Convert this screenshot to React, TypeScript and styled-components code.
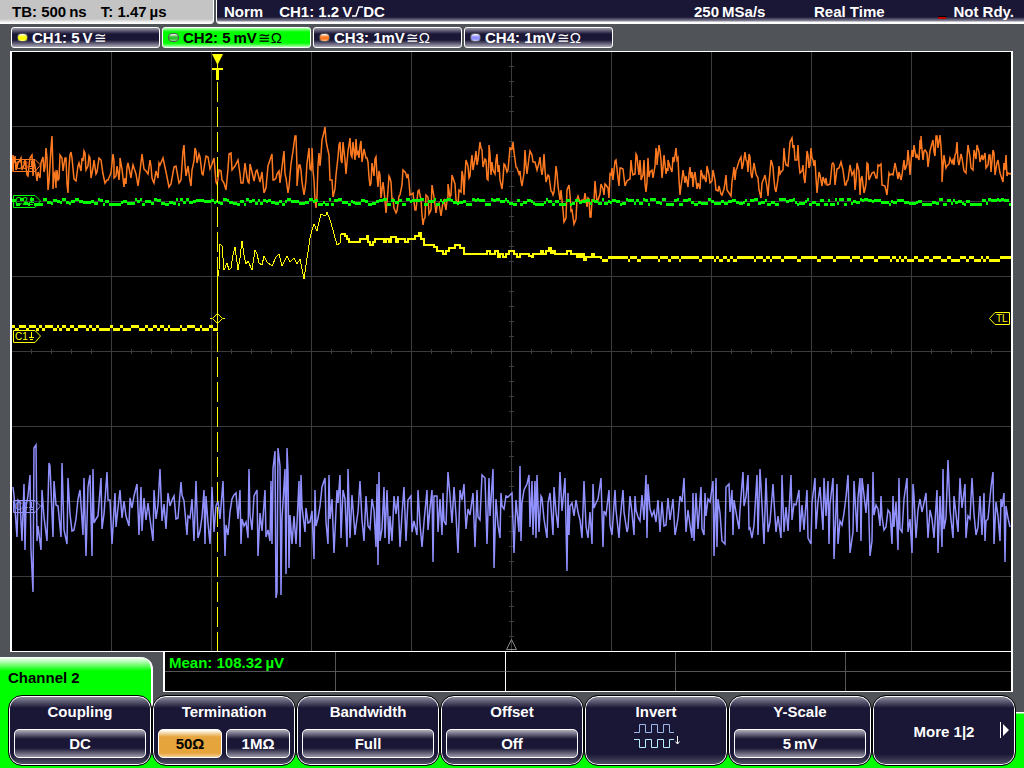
import React from "react";
import styled, { createGlobalStyle } from "styled-components";

const color = {
  shell: "#505458",
  navy: "#1a1635",
  green: "#00ff00",
  amber: "#e6a43c",
  yellow: "#ffff00",
  orange: "#ff7a20",
  violet: "#9090ff",
  grid: "#3c3c3c",
};

const Global = createGlobalStyle`
  *, *::before, *::after { box-sizing: border-box; }
  body {
    margin: 0;
    background: ${color.shell};
    font: bold 15px/18px "Liberation Sans", Arial, sans-serif;
  }
  button {
    margin: 0;
    padding: 0;
    font: inherit;
    cursor: pointer;
  }
`;

const Screen = styled.main`
  display: flex;
  flex-direction: column;
  min-height: 100vh;
  color: #fff;
  white-space: nowrap;
`;

/* ---------- header ---------- */

const Header = styled.header`
  display: flex;
  gap: 2px;
  height: 24px;
`;

const TimeBase = styled.div`
  display: flex;
  gap: 14px;
  flex: 0 0 214px;
  padding: 3px 0 0 12px;
  color: #000;
  background: linear-gradient(#c4c4c4 19px, #fff 23px);
  border-right: 1px solid #fff;
  border-radius: 0 0 4px 0;
`;

const Acquisition = styled.div`
  display: flex;
  flex: 1;
  align-items: flex-start;
  padding: 3px 0 0 7px;
  background: linear-gradient(${color.navy} 17px, #8c8a9c 21px, #fff 22px);
  border-left: 1px solid #fff;
  border-radius: 0 0 0 4px;
`;

const Trigger = styled.div`
  display: flex;
  flex: 1;
  gap: 16px;
`;

const SampleRate = styled.div`
  width: 120px;
`;

const Status = styled.div`
  display: flex;
  justify-content: space-between;
  width: 210px;
  padding-right: 10px;
`;

const Ready = styled.span`
  display: flex;
  align-items: flex-end;
  gap: 7px;
`;

const ReadyMark = styled.i`
  width: 8px;
  height: 3px;
  margin-bottom: 2px;
  background: #c00000;
  border-top: 1px solid #000;
`;

const SlopeIcon = styled.svg`
  margin: 0;
`;

/* ---------- channel buttons ---------- */

const Channels = styled.nav`
  display: flex;
  gap: 2px;
  padding: 3px 11px;
`;

const ChannelButton = styled.button<{ $active?: boolean }>`
  display: flex;
  align-items: center;
  width: 149px;
  height: 21px;
  padding-left: 5px;
  color: ${(p) => (p.$active ? "#000" : "#fff")};
  background: ${(p) =>
    p.$active
      ? `linear-gradient(#b0ffb0, ${color.green} 4px, ${color.green} 15px, #b0ffb0)`
      : `linear-gradient(#9a98a8, ${color.navy} 6px, ${color.navy} 12px, #aaa8b8)`};
  border: 1px solid #fff;
  border-radius: 3px;
`;

const Led = styled.i<{ $color: string }>`
  width: 11px;
  height: 9px;
  margin-right: 4px;
  background: linear-gradient(#fff, ${(p) => p.$color} 3px, ${(p) => p.$color} 5px, #fff 9px);
  border: 1px solid #555;
  border-radius: 4px;
`;

const Coupling = styled.span`
  margin-left: 1px;
  font-weight: normal;
`;

/* ---------- plot ---------- */

const Plot = styled.section`
  margin: 0 11px 0 10px;
  background: #000;
  border: solid #fff;
  border-width: 1px 2px;
`;

const PlotArea = styled.svg`
  display: block;
  width: 100%;
  height: auto;
`;

/* ---------- measurement strip ---------- */

const Strip = styled.section`
  display: flex;
  gap: 10px;
  height: 40px;
  margin-right: 11px;
`;

const MenuTab = styled.h1`
  flex: 0 0 153px;
  margin: 5px 0 0;
  padding: 12px 0 0 8px;
  font: inherit;
  color: #000;
  background: linear-gradient(#fff, #c0ffc0 4px, ${color.green} 14px);
  border-right: 2px solid #fff;
  border-radius: 0 12px 0 0;
`;

const Measurements = styled.table`
  flex: 1;
  display: table;
  width: 100%;
  height: 40px;
  table-layout: fixed;
  border-collapse: separate;
  border-spacing: 0;
  background: #000;
  border: solid #fff;
  border-width: 0 2px 1px;
  color: ${color.green};

  td {
    height: 19px;
    padding: 0 0 0 4px;
    line-height: 17px;
    border-left: 1px solid #555;
  }
  td:not(:last-child) { width: 20.1%; }
  td:first-child { border-left: 0; }
  td:nth-child(3) { border-left-color: #fff; }
  tr:first-child td { height: 20px; padding-top: 2px; border-bottom: 1px solid #555; }
`;

/* ---------- soft-key menu ---------- */

const Menu = styled.nav`
  display: grid;
  grid-template-columns: repeat(7, 1fr);
  flex: 1;
  align-items: start;
  padding: 3px 8px 2px;
  background:
    linear-gradient(${color.green}, ${color.green}) left top / 151px 14px no-repeat,
    linear-gradient(#fff, #fff) left top / 153px 14px no-repeat,
    linear-gradient(${color.green}, ${color.green}) left top / 20px 100% no-repeat,
    linear-gradient(#fff 1px, ${color.green} 2px) right 20px / 20px 100% no-repeat,
    linear-gradient(${color.green}, ${color.green}) left 63px / 100% 100% no-repeat,
    ${color.shell};
`;

const keyFace = `
  display: flex;
  flex-direction: column;
  align-items: center;
  height: 71px;
  color: #fff;
  background: linear-gradient(#8c8a9c 1px, ${color.navy} 12px, ${color.navy} 58px, #5c5a70 70px);
  border: 1px solid #000;
  border-radius: 14px;
  box-shadow: inset 0 0 0 1px #fff;
`;

const Key = styled.div`
  ${keyFace}
  padding: 7px 5px 7px;
`;

const KeyButton = styled.button<{ $center?: boolean }>`
  ${keyFace}
  position: relative;
  justify-content: ${(p) => (p.$center ? "center" : "flex-start")};
  padding: ${(p) => (p.$center ? "2px 0 0" : "7px 5px")};
`;

const Fields = styled.div`
  display: flex;
  gap: 4px;
  width: 100%;
  margin-top: auto;
`;

const Field = styled.button<{ $active?: boolean }>`
  flex: 1;
  height: 29px;
  color: ${(p) => (p.$active ? "#000" : "#fff")};
  background: ${(p) =>
    p.$active
      ? `linear-gradient(#fff, ${color.amber} 7px, ${color.amber} 23px, #f4d09a)`
      : `linear-gradient(#b0aebc, ${color.navy} 9px, ${color.navy} 18px, #9a98a8)`};
  border: 1px solid #fff;
  border-radius: 5px;
`;

const InvertIcon = styled.svg`
  margin: 2px 0 0 2px;
`;

const MoreArrow = styled.svg`
  position: absolute;
  right: 5px;
  top: 26px;
`;

/* ---------- traces ---------- */

type Point = [number, number];

const parse = (text: string): Point[] =>
  text
    .trim()
    .split(/\s+/)
    .map((pair) => pair.split(":").map(Number) as Point);

const noise = (seed: number) => {
  let s = seed;
  return () => {
    s = (s * 16807) % 2147483647;
    return s / 2147483647;
  };
};

const toLine = (points: Point[]) => points.map(([x, y]) => `${x},${y}`).join(" ");

/* Sample-and-hold drawing: hold each level, then jump to the next one. */
const toSteps = (points: Point[]) =>
  points.map(([x, y], i) => (i === 0 ? `M${x} ${y}` : `H${x}V${y}`)).join("");

const ch3Samples = parse(`
12:172 14:163 16:170 20:160 22:170 25:160 28:176 30:158 33:176 35:166 38:172 41:163 44:172 46:148 48:190 50:165 52:136 53:189
55:172 56:183 58:180 60:155 63:171 66:158 68:193 70:155 72:158 76:181 79:163 82:158 84:151 86:170 89:156 91:178 94:160 97:172
101:160 105:183 108:180 113:154 114:178 117:166 119:180 120:158 124:187 126:184 128:163 131:178 133:165 138:186 142:154 146:171
150:160 152:178 154:183 158:178 160:165 166:172 171:184 176:166 181:180 184:145 186:176 190:181 192:170 195:148 197:163 200:157
203:175 206:156 210:169 214:158 217:184 219:170 222:180 226:190 229:154 232:170 238:160 241:183 245:163 248:182 250:164 254:181
257:170 262:172 264:193 268:166 272:154 274:180 277:174 280:183 284:151 286:178 289:187 293:151 296:136 297:186 300:165 302:182
305:189 307:163 309:148 311:170 312:148 314:180 316:208 318:165 320:166 322:140 325:127 327:146 330:180 333:197 336:175 339:145
341:160 343:142 346:174 349:145 351:155 353:142 355:160 356:139 358:152 360:146 362:162 366:158 368:162 370:186 372:163 374:176
376:157 378:187 380:175 381:198 384:190 386:213 388:190 390:178 392:200 394:208 397:211 400:195 403:170 406:174 408:174 410:195
413:193 416:210 419:190 422:215 424:219 426:195 429:214 432:185 434:197 437:206 441:216 444:200 447:200 448:184 451:195 453:178
456:200 459:190 462:171 464:195 466:160 469:178 471:163 473:170 476:151 478:160 481:148 483:167 486:160 488:180 489:145 491:175
493:170 496:160 498:172 500:180 503:179 505:165 508:170 512:149 514:152 517:168 520:171 522:186 525:150 527:174 530:151 533:162
537:170 540:157 542:175 544:154 546:182 549:176 552:192 554:192 556:166 558:186 561:190 564:222 567:190 570:195 572:210 576:219
578:196 582:200 585:193 588:198 590:217 592:200 595:181 598:200 601:184 604:195 606:185 609:198 611:175 613:180 616:160 619:186
621:168 625:186 628:180 631:160 633:175 636:154 638:167 640:160 641:180 644:160 646:192 648:158 650:172 653:178 656:148 657:165
660:151 662:178 664:155 667:168 668:160 672:172 674:162 677:160 679:180 681:186 683:170 686:176 689:174 691:178 693:187 695:172
698:183 701:170 704:176 707:166 710:183 713:170 716:190 719:186 722:195 725:183 727:190 731:196 733:175 735:180 737:168 741:157
743:165 746:160 748:172 750:157 752:178 756:174 759:190 762:183 765:175 768:196 770:172 772:163 774:180 776:192 779:166 781:172
784:148 786:165 790:142 793:148 795:160 798:145 800:173 803:165 805:183 807:151 809:168 811:148 813:160 815:160 817:193 820:175
823:177 826:178 828:185 831:175 833:163 835:185 839:168 843:170 846:185 848:180 852:175 855:190 857:163 860:195 862:176 865:189
867:163 869:180 874:172 877:178 879:166 882:185 887:195 890:175 893:175 896:168 899:172 902:175 905:170 908:150 910:175 912:150
914:145 917:155 920:140 921:136 923:160 925:150 928:167 931:147 934:152 936:136 938:148 941:147 942:182 944:155 947:166 950:158
953:160 955:155 957:142 959:165 962:158 966:173 968:145 971:168 974:150 977:145 980:162 983:160 986:168 989:155 991:172 993:150
995:175 998:160 1001:176 1004:163 1006:155 1008:173 1011:173
`);

const ch4Peaks = parse(`
13:487 17:537 22:541 24:484 25:550 30:475 31:550 33:592 34:448 36:445 37:541 41:550 42:490 47:541 49:463 50:466 53:537 54:481
61:537 62:463 67:544 68:478 80:490 83:535 84:478 86:556 88:487 90:475 92:556 93:469 101:478 102:529 107:472 112:544 115:493
120:490 129:526 137:484 139:535 141:487 153:541 154:490 160:469 168:493 166:529 181:482 187:535 194:541 196:481 198:538 204:490
205:544 210:544 212:487 214:532 223:481 225:556 228:535 236:493 240:490 241:544 248:538 249:469 257:490 258:556 265:490 266:537
270:541 271:481 272:544 273:469 275:451 276:598 277:592 278:448 280:466 281:595 285:469 286:574 287:448 288:472 289:568 292:544
296:544 299:481 300:547 301:475 305:532 314:559 315:490 322:487 325:478 328:544 329:475 332:499 334:553 337:490 340:475 341:538
343:490 345:499 347:547 348:469 350:538 355:535 360:481 364:541 366:496 372:499 376:547 377:484 378:565 379:472 380:541 384:487
385:538 387:490 389:544 392:541 398:496 400:547 404:487 406:541 411:496 412:532 417:535 418:490 422:547 427:490 432:490 433:562
437:496 438:532 442:535 443:493 448:472 454:487 458:553 460:490 464:484 466:529 473:493 475:547 477:490 482:475 485:478 487:544
489:478 493:469 494:568 500:538 501:493 512:493 514:553 519:532 520:466 521:541 524:490 527:484 529:475 532:481 533:535 535:481
536:538 537:475 539:532 541:496 547:538 550:493 553:535 554:487 560:472 565:478 567:571 568:493 569:535 576:500 582:538 584:481
588:538 592:544 593:484 601:478 603:547 609:490 612:535 615:490 619:538 623:490 627:532 630:496 634:535 635:496 646:475 647:538
648:484 660:532 662:502 673:499 675:535 680:496 684:478 686:532 692:538 693:493 694:541 696:493 701:487 704:535 705:493 713:481
714:556 716:478 717:547 722:541 725:544 726:487 729:484 732:490 733:535 739:529 742:484 743:472 748:475 749:529 752:538 757:475
758:535 760:469 764:544 766:478 768:532 773:484 776:532 781:538 782:475 784:532 791:475 792:520 799:490 800:532 807:490 808:538
811:544 815:478 820:487 823:530 824:478 828:481 829:544 833:478 834:559 837:484 838:544 848:475 850:553 853:532 854:481 857:532
860:478 861:541 862:478 868:484 870:556 872:541 873:472 880:526 881:496 892:544 893:496 898:550 899:478 902:532 907:478 908:532
912:553 913:484 914:496 916:538 926:493 928:538 934:538 937:490 938:553 942:547 943:469 948:460 953:538 954:496 958:532 960:478
965:484 966:538 972:478 976:535 980:496 982:535 984:493 985:541 991:487 993:472 994:544 1000:541 1001:499 1004:493 1005:562
`).sort((a, b) => a[0] - b[0]);

const buildCh3 = (): Point[] => {
  const rnd = noise(31);
  return ch3Samples.flatMap(([x, y], i) => {
    const next = ch3Samples[i + 1];
    if (!next) return [[x, y] as Point];
    const mid = Math.round((y + next[1]) / 2 + (rnd() - 0.5) * 26);
    return [[x, y], [Math.round((x + next[0]) / 2), mid]] as Point[];
  });
};

const buildCh4 = (): Point[] => {
  const rnd = noise(77);
  const taken = new Set(ch4Peaks.map(([x]) => x));
  const filler: Point[] = [];
  for (let x = 12; x <= 1011; x += 2) {
    if (!taken.has(x) && !taken.has(x + 1)) filler.push([x, Math.round(495 + rnd() * 36)]);
  }
  return [...ch4Peaks, ...filler].sort((a, b) => a[0] - b[0]);
};

const stepped = (from: number, to: number, levels: number[], seed: number): Point[] => {
  const rnd = noise(seed);
  const out: Point[] = [];
  let x = from;
  while (x < to) {
    const y = levels[Math.floor(rnd() * levels.length)];
    const end = Math.min(to, x + 2 + Math.floor(rnd() * 3));
    out.push([x, y], [end, y]);
    x = end;
  }
  return out;
};

/* Quantised levels as separate dashes, one per sample run. */
const toDashes = (points: Point[]) =>
  points.map(([x, y], i) => (i % 2 === 0 ? `M${x} ${y}.5` : `H${x}`)).join("");

const ch1Transient = parse(`
217:331 217:282 219:270 220:244 222:246 224:270 227:263 229:270 231:268 233:255 235:247 238:270 240:258 242:241 244:255 246:264
248:261 252:270 255:250 257:254 259:263 262:265 264:256 267:262 272:266 276:257 279:254 282:266 287:256 290:262 294:258 297:264
300:259 304:279 306:265 308:252 310:238 312:230 314:224 317:231 319:222 321:214 323:215 326:215 327:212 330:220 333:230 337:245
340:243 341:234 345:234
`);

const ch1Settling = parse(`
341:234 345:236 347:239 349:242 360:239 362:239 367:236 368:242 370:245 373:242 375:239 384:242 386:239 389:242 391:237 396:242
398:239 402:239 405:242 408:239 413:239 415:236 417:236 419:233 421:239 424:245 434:247 437:251 443:254 446:251 449:248 455:245
460:248 464:254 486:254 487:251 490:254 495:251 498:257 500:254 503:257 506:254 509:251 514:254 517:257 520:254 529:256 532:257
533:254 541:251 543:254 546:251 549:248 551:253 553:251 555:254 567:251 571:254 577:257 579:254 581:257 583:254 584:260 586:257
592:254 594:257 600:257
`);

const traces = {
  ch1Idle: toDashes(stepped(12, 217, [326, 329], 5)),
  ch1Rise: toLine(ch1Transient),
  ch1Settle: toSteps(ch1Settling),
  ch1High: toDashes(stepped(600, 1011, [257, 257, 257, 260], 9)),
  ch2: toDashes(stepped(12, 1011, [200, 201, 202, 203, 204, 199], 13)),
  ch3: toLine(buildCh3()),
  ch4: toLine(buildCh4()),
};

const range = (from: number, to: number, step: number) => {
  const out: number[] = [];
  for (let v = from; v <= to; v += step) out.push(v);
  return out;
};

const gridPath = [
  ...range(111, 911, 100).map((x) => `M${x}.5 52V651`),
  ...range(126, 576, 75).map((y) => `M12 ${y}.5H1011`),
  ...range(31, 991, 20).map((x) => `M${x}.5 349V354`),
  ...range(66, 636, 15).map((y) => `M509 ${y}.5H514`),
].join("");

const ChannelTag = ({ y, label, stroke }: { y: number; label: string; stroke: string }) => (
  <g stroke={stroke} fill="none">
    <path d={`M13.5 ${y - 6}.5H35L40.5 ${y}L35 ${y + 6}.5H13.5Z`} />
    <path d={`M31.5 ${y - 4}V${y + 1}M29 ${y + 1}.5H34M30 ${y + 3}.5H33`} />
    <text x="15" y={y + 4} fill={stroke} stroke="none" fontSize="10" fontWeight="normal">
      {label}
    </text>
  </g>
);

const Oscillogram = () => (
  <PlotArea viewBox="12 52 999 599" role="img" aria-label="Oscillogram">
    <path d={gridPath} stroke={color.grid} fill="none" />
    <path d="M511.5 639.5L516.5 649.5H506.5Z" stroke="#8a8a8a" fill="none" />
    <g fill="none">
      <polyline points={traces.ch4} stroke={color.violet} strokeWidth="1.5" />
      <polyline points={traces.ch3} stroke={color.orange} strokeWidth="1.5" />
    </g>
    <g fill="none" shapeRendering="crispEdges">
      <path d={traces.ch2} stroke={color.green} strokeWidth="3" />
      <g stroke={color.yellow}>
        <path d={traces.ch1Idle} strokeWidth="3" />
        <polyline points={traces.ch1Rise} strokeWidth="1" />
        <path d={traces.ch1Settle} strokeWidth="2" />
        <path d={traces.ch1High} strokeWidth="3" />
      </g>
    </g>
    <path d="M217.5 82V651" stroke={color.yellow} strokeDasharray="20 5" />
    <path d="M217.5 60V68M217.5 282V331" stroke={color.yellow} />
    <path d="M212 54H223L218 64H217ZM212 68H223V70H219V80H216V70H212Z" fill={color.yellow} />
    <path
      d="M210 318.5H212M223 318.5H225M212.5 318.5L217.5 313.5L222.5 318.5L217.5 323.5Z"
      stroke={color.yellow}
      fill="none"
    />
    <ChannelTag y={165} label="C3" stroke={color.orange} />
    <ChannelTag y={201} label="C2" stroke={color.green} />
    <ChannelTag y={336} label="C1" stroke={color.yellow} />
    <ChannelTag y={506} label="C4" stroke={color.violet} />
    <path d="M1009.5 312.5H995L989.5 318.5L995 324.5H1009.5Z" stroke={color.yellow} fill="none" />
    <text x="996" y="322" fill={color.yellow} fontSize="10" fontWeight="normal">
      TL
    </text>
  </PlotArea>
);

const channels = [
  { name: "CH1: 5\u2009V", coupling: "≅", led: color.yellow },
  { name: "CH2: 5\u2009mV", coupling: "≅Ω", led: "#30c030", active: true },
  { name: "CH3: 1mV", coupling: "≅Ω", led: color.orange },
  { name: "CH4: 1mV", coupling: "≅Ω", led: color.violet },
];

export default function App() {
  return (
    <>
      <Global />
      <Screen>
        <Header>
          <TimeBase>
            <span>TB: 500{"\u2009"}ns</span>
            <span>T: 1.47{"\u2009"}µs</span>
          </TimeBase>
          <Acquisition>
            <Trigger>
              <span>Norm</span>
              <span>
                CH1: 1.2{"\u2009"}V
                <SlopeIcon width="11" height="11" viewBox="0 0 11 11" fill="none" stroke="#fff">
                  <path d="M0 10H4L7 1H11" strokeWidth="1.5" />
                </SlopeIcon>
                DC
              </span>
            </Trigger>
            <SampleRate>250{"\u2009"}MSa/s</SampleRate>
            <Status>
              <span>Real Time</span>
              <Ready>
                <ReadyMark />
                Not Rdy.
              </Ready>
            </Status>
          </Acquisition>
        </Header>

        <Channels aria-label="Channels">
          {channels.map((c) => (
            <ChannelButton key={c.name} type="button" $active={c.active}>
              <Led $color={c.led} />
              {c.name}
              <Coupling>{c.coupling}</Coupling>
            </ChannelButton>
          ))}
        </Channels>

        <Plot>
          <Oscillogram />
        </Plot>

        <Strip>
          <MenuTab>Channel 2</MenuTab>
          <Measurements>
            <tbody>
              <tr>
                <td>Mean: 108.32{"\u2009"}µV</td>
                <td />
                <td />
                <td />
                <td />
              </tr>
              <tr>
                <td />
                <td />
                <td />
                <td />
                <td />
              </tr>
            </tbody>
          </Measurements>
        </Strip>

        <Menu aria-label="Channel 2 settings">
          <Key>
            <span id="coupling">Coupling</span>
            <Fields>
              <Field type="button" aria-describedby="coupling">DC</Field>
            </Fields>
          </Key>
          <Key>
            <span id="termination">Termination</span>
            <Fields>
              <Field type="button" aria-describedby="termination" $active>50Ω</Field>
              <Field type="button" aria-describedby="termination">1MΩ</Field>
            </Fields>
          </Key>
          <Key>
            <span id="bandwidth">Bandwidth</span>
            <Fields>
              <Field type="button" aria-describedby="bandwidth">Full</Field>
            </Fields>
          </Key>
          <Key>
            <span id="offset">Offset</span>
            <Fields>
              <Field type="button" aria-describedby="offset">Off</Field>
            </Fields>
          </Key>
          <KeyButton type="button">
            Invert
            <InvertIcon width="48" height="26" viewBox="0 0 48 26" fill="none">
              <path
                d="M1 9.5H6.5V1.5H12.5V9.5H18.5V1.5H24.5V9.5H30.5V1.5H36.5V9.5H41"
                stroke="#9db8e8"
              />
              <path
                d="M1 16.5H6.5V24.5H12.5V16.5H18.5V24.5H24.5V16.5H30.5V24.5H36.5V16.5H41"
                stroke="#b8ecff"
              />
              <path d="M44.5 13V21M42.5 18.5L44.5 21L46.5 18.5" stroke="#fff" />
            </InvertIcon>
          </KeyButton>
          <Key>
            <span id="scale">Y-Scale</span>
            <Fields>
              <Field type="button" aria-describedby="scale">5{"\u2009"}mV</Field>
            </Fields>
          </Key>
          <KeyButton type="button" $center>
            More 1|2
            <MoreArrow width="10" height="16" viewBox="0 0 10 16">
              <path d="M0 0H1V16H0ZM3 2L9 8L3 14Z" fill="#fff" />
            </MoreArrow>
          </KeyButton>
        </Menu>
      </Screen>
    </>
  );
}
